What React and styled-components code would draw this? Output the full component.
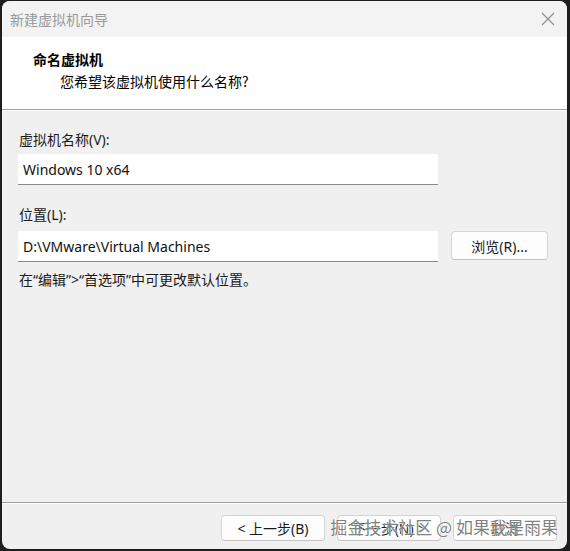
import React from "react";
import styled, { createGlobalStyle } from "styled-components";

const GlobalStyle = createGlobalStyle`
	html, body {
		margin: 0;
		padding: 0;
		background: #1e1e1e;
	}
	body {
		font-family: "Segoe UI", "Noto Sans CJK SC", "Noto Sans", sans-serif;
	}
`;

const Frame = styled.div`
	width: 570px;
	height: 551px;
	padding: 1px 3px 2px 2px;
	box-sizing: border-box;
	display: flex;
`;

const Window = styled.div`
	position: relative;
	flex: 1;
	display: flex;
	flex-direction: column;
	background: #f0f0f0;
	border-radius: 8px;
	overflow: hidden;
	font-size: 14px;
	color: #1a1a1a;
`;

const TitleBar = styled.div`
	height: 36px;
	flex-shrink: 0;
	display: flex;
	align-items: center;
	justify-content: space-between;
	padding: 0 12px 0 8px;
	background: #f3f3f3;
`;

const Title = styled.span`
	font-family: "Noto Sans CJK SC", sans-serif;
	font-size: 14px;
	color: #999999;
	line-height: 20px;
`;

const Header = styled.div`
	height: 73px;
	flex-shrink: 0;
	box-sizing: border-box;
	background: #ffffff;
	border-bottom: 1px solid #a0a0a0;
	padding: 12px 0 0 31px;
	font-family: "Noto Sans CJK SC", sans-serif;
`;

const HeaderTitle = styled.div`
	font-weight: 700;
	font-size: 14px;
	line-height: 20px;
	color: #000;
`;

const HeaderSub = styled.div`
	font-size: 14px;
	line-height: 20px;
	margin: 2px 0 0 27px;
	color: #000;
`;

const Content = styled.div`
	flex: 1;
	padding: 20px 19px 0 16px;
	box-shadow: inset 0 1px 0 #ffffff;
`;

const Label = styled.div`
	font-family: "Noto Sans", "Noto Sans CJK SC", sans-serif;
	line-height: 20px;
	padding-left: 1px;
	margin-top: ${(p) => p.$top || 0}px;
`;

const FieldRow = styled.div`
	display: flex;
	align-items: flex-start;
	gap: 13px;
	margin-top: ${(p) => p.$top || 0}px;
`;

const Input = styled.div`
	width: 420px;
	height: 31px;
	box-sizing: border-box;
	background: #ffffff;
	border-bottom: 1px solid #8a8a8a;
	padding: 0 5px;
	display: flex;
	align-items: center;
	font-family: "Segoe UI", "Noto Sans", "Noto Sans CJK SC", sans-serif;
	font-size: 14px;
	color: #111;
`;

const Button = styled.button`
	width: ${(p) => p.$w || 104}px;
	height: ${(p) => p.$h || 26}px;
	box-sizing: border-box;
	background: #fdfdfd;
	border: 1px solid #d4d4d4;
	border-bottom-color: #c4c4c4;
	border-radius: 4px;
	font-family: "Noto Sans", "Noto Sans CJK SC", sans-serif;
	font-size: 14px;
	color: #1a1a1a;
	padding: 0;
	display: flex;
	align-items: center;
	justify-content: center;
`;

const Hint = styled.div`
	font-family: "Noto Sans", "Noto Sans CJK SC", sans-serif;
	line-height: 20px;
	margin-top: 8px;
	padding-left: 1px;
`;

const Footer = styled.div`
	height: 47px;
	flex-shrink: 0;
	box-sizing: border-box;
	border-top: 1px solid #a0a0a0;
	box-shadow: inset 0 1px 0 #ffffff;
	display: flex;
	justify-content: flex-end;
	gap: 12px;
	padding: 12px 10px 0 0;
`;

const Watermark = styled.div`
	position: absolute;
	right: 9px;
	bottom: 10px;
	font-family: "Noto Sans CJK SC", sans-serif;
	font-size: 17px;
	line-height: 24px;
	color: rgba(105, 105, 105, 0.85);
	text-shadow: 0 0 2px #ffffff, 0 0 1px #ffffff;
	white-space: nowrap;
	pointer-events: none;
`;

const CloseIcon = () => (
	<svg width="14" height="14" viewBox="0 0 14 14">
		<path d="M1 1 L13 13 M13 1 L1 13" stroke="#8c8c8c" strokeWidth="1.1" fill="none" />
	</svg>
);

export default function App() {
	return (
		<>
			<GlobalStyle />
			<Frame>
				<Window>
					<TitleBar>
						<Title>新建虚拟机向导</Title>
						<CloseIcon />
					</TitleBar>
					<Header>
						<HeaderTitle>命名虚拟机</HeaderTitle>
						<HeaderSub>您希望该虚拟机使用什么名称?</HeaderSub>
					</Header>
					<Content>
						<Label>虚拟机名称(V):</Label>
						<FieldRow $top={4}>
							<Input>Windows 10 x64</Input>
						</FieldRow>
						<Label $top={20}>位置(L):</Label>
						<FieldRow $top={6}>
							<Input>D:\VMware\Virtual Machines</Input>
							<Button $w={97} $h={29}>浏览(R)...</Button>
						</FieldRow>
						<Hint>在“编辑”&gt;“首选项”中可更改默认位置。</Hint>
					</Content>
					<Footer>
						<Button>&lt; 上一步(B)</Button>
						<Button>下一步(N) &gt;</Button>
						<Button>取消</Button>
					</Footer>
					<Watermark>掘金技术社区 @ 如果我是雨果</Watermark>
				</Window>
			</Frame>
		</>
	);
}
